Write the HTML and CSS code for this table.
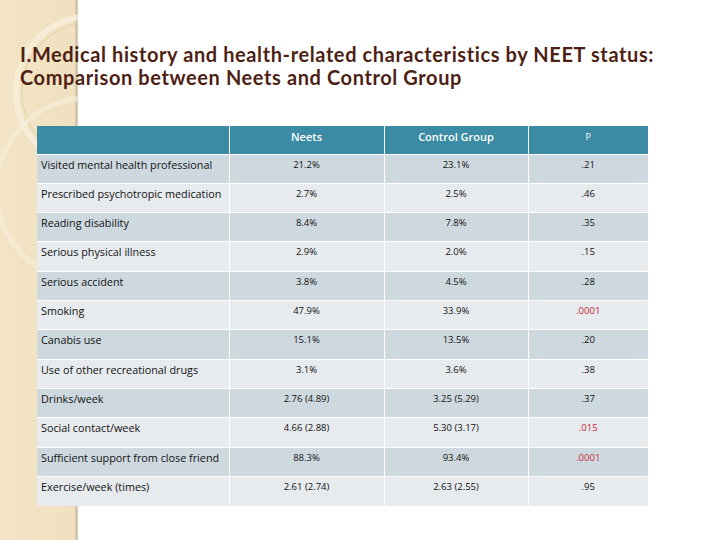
FILE: index.html
```html
<!DOCTYPE html>
<html>
<head>
<meta charset="utf-8">
<link rel="stylesheet" href="styles.css">
</head>
<body>
<svg class="deco" width="78" height="540" viewBox="0 0 78 540">
  <circle cx="92" cy="92" r="76" fill="none" stroke="#f8efdc" stroke-width="6" opacity="0.8"/>
  <circle cx="92" cy="92" r="70" fill="none" stroke="#e3d2ad" stroke-width="1.5" opacity="0.7"/>
  <circle cx="88" cy="190" r="92" fill="none" stroke="#f8efdc" stroke-width="5" opacity="0.6"/>
</svg>
<div class="slide">
  <h1 class="title">I.Medical history and health-related characteristics by NEET status:<br>Comparison between Neets and Control Group</h1>
  <table class="data">
    <colgroup>
      <col class="c1"><col class="c2"><col class="c3"><col class="c4">
    </colgroup>
    <thead>
      <tr><th></th><th class="neets">Neets</th><th>Control Group</th><th class="p">P</th></tr>
    </thead>
    <tbody>
      <tr><td>Visited mental health professional</td><td>21.2%</td><td>23.1%</td><td>.21</td></tr>
      <tr><td>Prescribed psychotropic medication</td><td>2.7%</td><td>2.5%</td><td>.46</td></tr>
      <tr><td>Reading disability</td><td>8.4%</td><td>7.8%</td><td>.35</td></tr>
      <tr><td>Serious physical illness</td><td>2.9%</td><td>2.0%</td><td>.15</td></tr>
      <tr><td>Serious accident</td><td>3.8%</td><td>4.5%</td><td>.28</td></tr>
      <tr><td>Smoking</td><td>47.9%</td><td>33.9%</td><td class="sig">.0001</td></tr>
      <tr><td>Canabis use</td><td>15.1%</td><td>13.5%</td><td>.20</td></tr>
      <tr><td>Use of other recreational drugs</td><td>3.1%</td><td>3.6%</td><td>.38</td></tr>
      <tr><td>Drinks/week</td><td>2.76 (4.89)</td><td>3.25 (5.29)</td><td>.37</td></tr>
      <tr><td>Social contact/week</td><td>4.66 (2.88)</td><td>5.30 (3.17)</td><td class="sig">.015</td></tr>
      <tr><td>Sufficient support from close friend</td><td>88.3%</td><td>93.4%</td><td class="sig">.0001</td></tr>
      <tr><td>Exercise/week (times)</td><td>2.61 (2.74)</td><td>2.63 (2.55)</td><td>.95</td></tr>
    </tbody>
  </table>
</div>
</body>
</html>
```
FILE: styles.css
```css
html, body {
  margin: 0;
  padding: 0;
}
body {
  width: 720px;
  height: 540px;
  overflow: hidden;
  position: relative;
  background: linear-gradient(to right, #f2e4c5 0, #f0e1c0 75px, #d6c8ad 75px, #d6c8ad 78px, #ffffff 78px);
  font-family: "Open Sans", "Liberation Sans", Arial, sans-serif;
}
.deco {
  position: absolute;
  left: 0;
  top: 0;
}
.slide {
  position: relative;
  display: flex;
  flex-direction: column;
}
.title {
  margin: 43px 0 0 20px;
  font-family: Lato, "Liberation Sans", sans-serif;
  font-weight: bold;
  font-size: 20px;
  line-height: 23px;
  color: #4e1f15;
  letter-spacing: 0.6px;
}
.data {
  margin: 37px 0 0 37px;
  width: 611px;
  border-collapse: collapse;
  table-layout: fixed;
  font-size: 9.5px;
  color: #111111;
}
.c1 { width: 192px; }
.c2 { width: 155px; }
.c3 { width: 144px; }
.c4 { width: 120px; }
.data th {
  height: 28px;
  padding: 0 0 6px 0;
  background: #3a8ba3;
  color: #ffffff;
  font-size: 11px;
  font-weight: 600;
  border: 1px solid #ffffff;
  border-top: none;
  text-align: center;
  box-sizing: border-box;
}
.data th.p {
  font-weight: normal;
  font-size: 9px;
}
.data th:first-child { border-left: none; }
.data th:last-child { border-right: none; }
.data td {
  height: 29.33px;
  box-sizing: border-box;
  padding: 3px 0 0 0;
  vertical-align: top;
  text-align: center;
  line-height: 13px;
  border: 1px solid #ffffff;
}
.data td:first-child {
  text-align: left;
  padding-left: 4px;
  font-size: 10.8px;
  border-left: none;
}
.data td:last-child { border-right: none; }
.data tbody tr:nth-child(odd) td { background: #ced9df; }
.data tbody tr:nth-child(even) td { background: #e7ebee; }
.data tbody tr:last-child td { border-bottom: none; }
.data td.sig { color: #c8283c; }
```
